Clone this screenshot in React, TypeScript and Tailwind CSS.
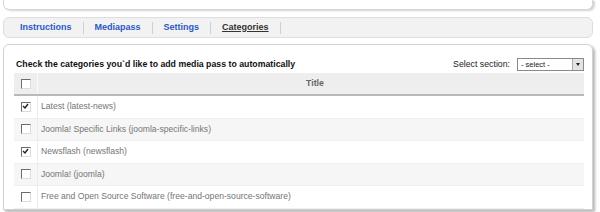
import React from 'react';

const rows = [
  { label: 'Latest (latest-news)', checked: true },
  { label: 'Joomla! Specific Links (joomla-specific-links)', checked: false },
  { label: 'Newsflash (newsflash)', checked: true },
  { label: 'Joomla! (joomla)', checked: false },
  { label: 'Free and Open Source Software (free-and-open-source-software)', checked: false },
];

const tabs = ['Instructions', 'Mediapass', 'Settings', 'Categories'];

// Classic win-style checkbox
function Check({ checked }: { checked: boolean }) {
  return (
    <div className="w-[10px] h-[10px] bg-white border-t border-l border-t-[#6d6d6d] border-l-[#6d6d6d] border-b border-r border-b-[#dcdcdc] border-r-[#dcdcdc] flex items-center justify-center">
      {checked && (
        <svg width="7" height="7" viewBox="0 0 7 7">
          <path d="M1 3 L3 5 L6 1" fill="none" stroke="#222" strokeWidth="1.4" />
        </svg>
      )}
    </div>
  );
}

export default function App() {
  return (
    <div className="w-[600px] h-[212px] bg-white overflow-hidden font-['Liberation_Sans',Arial,sans-serif] pl-[3px] pr-[7px]">
      {/* Top panel end */}
      <div className="h-[10px] bg-white border border-t-0 border-[#d6d6d6] rounded-b-[6px] shadow-[2px_1px_2px_rgba(0,0,0,0.18)]" />

      {/* Tabs */}
      <div className="mt-[7px] h-[21px] bg-[#f2f2f2] border border-[#dedede] rounded-[6px] flex items-center pl-[16px] text-[9px] font-bold">
        {tabs.map((t) => (
          <div key={t} className="flex items-center">
            <span className={t === 'Categories' ? 'text-[#333] underline' : 'text-[#2a58c6]'}>
              {t}
            </span>
            <span className="mx-[11px] w-px h-[12px] bg-[#cfcfcf]" />
          </div>
        ))}
      </div>

      {/* Main panel */}
      <div className="mt-[6px] h-[166px] bg-white border border-[#d2d2d2] rounded-t-[6px] shadow-[2px_2px_3px_rgba(0,0,0,0.3)] pl-[10px] pr-[8px] pt-[11px]">
        <div className="flex items-center justify-between h-[17px]">
          <span className="text-[8.75px] font-bold text-[#111] pl-[2px]">
            Check the categories you`d like to add media pass to automatically
          </span>
          <div className="flex items-center gap-[7px]">
            <span className="text-[8.75px] text-[#222]">Select section:</span>
            <div className="w-[67px] h-[13px] border border-[#8a8a8a] bg-white flex items-center justify-between pl-[3px] text-[7.5px] text-[#222]">
              <span>- select -</span>
              <div className="w-[11px] h-[11px] bg-[#e4e4e4] border-l border-[#aaa] flex items-center justify-center">
                <div className="w-0 h-0 border-l-[2.5px] border-r-[2.5px] border-t-[3px] border-l-transparent border-r-transparent border-t-[#222]" />
              </div>
            </div>
          </div>
        </div>

        <div>
          {/* Header */}
          <div className="flex h-[23px] bg-[#eeeeee] border-b-2 border-[#b9b9b9]">
            <div className="w-[24px] flex items-center justify-center border-r border-[#fafafa]">
              <Check checked={false} />
            </div>
            <div className="flex-1 flex items-center justify-center text-[8.75px] font-bold text-[#666] pl-[8px]">
              Title
            </div>
          </div>
          {rows.map((r, i) => (
            <div
              key={r.label}
              className={`flex h-[22.5px] border-b border-[#efefef] ${i % 2 === 1 ? 'bg-[#f6f6f6]' : 'bg-white'}`}
            >
              <div className="w-[24px] flex items-center justify-center border-r border-[#ececec]">
                <Check checked={r.checked} />
              </div>
              <div className="flex-1 flex items-center pl-[3px] text-[8.6px] text-[#757575]">
                {r.label}
              </div>
            </div>
          ))}
        </div>
      </div>
    </div>
  );
}
